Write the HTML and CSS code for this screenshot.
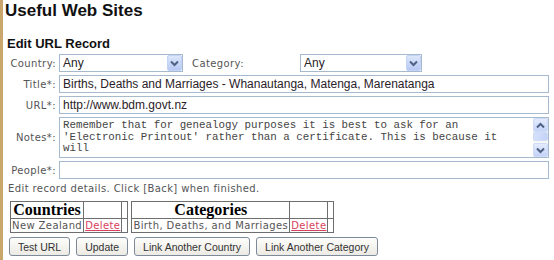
FILE: index.html
```html
<!DOCTYPE html>
<html lang="en">
<head>
	<meta charset="UTF-8">
	<title>Useful Web Sites</title>
	<link rel="stylesheet" href="styles.css">
</head>
<body>
	<h1 class="page-title">Useful Web Sites</h1>
	<h2 class="form-title">Edit URL Record</h2>

	<form class="record">
		<div class="row">
			<label class="lbl">Country:</label>
			<span class="combo combo-country">
				<select><option>Any</option></select>
				<span class="combo-btn"><svg width="9" height="7" viewBox="0 0 9 7"><path d="M1 1.5 L4.5 5 L8 1.5" fill="none" stroke="#4d6185" stroke-width="2"/></svg></span>
			</span>
			<label class="lbl-cat">Category:</label>
			<span class="combo combo-cat">
				<select><option>Any</option></select>
				<span class="combo-btn"><svg width="9" height="7" viewBox="0 0 9 7"><path d="M1 1.5 L4.5 5 L8 1.5" fill="none" stroke="#4d6185" stroke-width="2"/></svg></span>
			</span>
		</div>
		<div class="row">
			<label class="lbl">Title*:</label>
			<input class="field" type="text" value="Births, Deaths and Marriages - Whanautanga, Matenga, Marenatanga">
		</div>
		<div class="row">
			<label class="lbl">URL*:</label>
			<input class="field" type="text" value="http://www.bdm.govt.nz">
		</div>
		<div class="row">
			<label class="lbl">Notes*:</label>
			<span class="notes-wrap">
				<textarea class="field notes">Remember that for genealogy purposes it is best to ask for an 'Electronic Printout' rather than a certificate. This is because it will</textarea>
				<span class="scrollbar">
					<span class="sb-btn"><svg width="9" height="7" viewBox="0 0 9 7"><path d="M1 5.5 L4.5 2 L8 5.5" fill="none" stroke="#4d6185" stroke-width="2"/></svg></span>
					<span class="sb-thumb"></span>
					<span class="sb-track"></span>
					<span class="sb-btn"><svg width="9" height="7" viewBox="0 0 9 7"><path d="M1 1.5 L4.5 5 L8 1.5" fill="none" stroke="#4d6185" stroke-width="2"/></svg></span>
				</span>
			</span>
		</div>
		<div class="row">
			<label class="lbl">People*:</label>
			<input class="field" type="text" value="">
		</div>
	</form>

	<p class="hint">Edit record details. Click [Back] when finished.</p>

	<div class="links">
		<table class="link-table">
			<tr><th>Countries</th><th></th><th class="spacer"></th></tr>
			<tr><td>New Zealand</td><td><a href="">Delete</a></td><td class="spacer"></td></tr>
		</table>
		<table class="link-table">
			<tr><th>Categories</th><th></th><th class="spacer"></th></tr>
			<tr><td>Birth, Deaths, and Marriages</td><td><a href="">Delete</a></td><td class="spacer"></td></tr>
		</table>
	</div>

	<div class="buttons">
		<button type="button">Test URL</button>
		<button type="button">Update</button>
		<button type="button" class="wide">Link Another Country</button>
		<button type="button" class="wide">Link Another Category</button>
	</div>
</body>
</html>
```

FILE: styles.css
```css
*{box-sizing:border-box;}
html,body{height:100%;}
body{margin:0;padding:0 0 0 2px;border-left:3px solid #c8a66c;min-height:260px;background:#fff;font-family:"DejaVu Sans",Verdana,sans-serif;font-size:10px;letter-spacing:0.4px;color:#555;}

.page-title{margin:0;padding-top:1px;font:bold 17px/20px "Liberation Sans",Arial,sans-serif;letter-spacing:0;color:#111;}
.form-title{margin:15px 0 0 2px;font:bold 13px/16px "Liberation Sans",Arial,sans-serif;letter-spacing:0;color:#111;}

.record{margin-top:2px;}
.record .row{display:flex;align-items:center;margin-bottom:3px;}
.lbl{width:51px;text-align:right;margin-right:3px;white-space:nowrap;}
.lbl-cat{width:108px;margin-left:9px;}

.field{width:490px;height:18px;border:1px solid #a5b9cf;padding:0 3px;font:12px "Liberation Sans",Arial,sans-serif;letter-spacing:0;color:#2a2228;background:#fff;outline:none;}

.combo{position:relative;display:inline-block;height:18px;}
.combo select{appearance:none;-webkit-appearance:none;width:100%;height:18px;border:1px solid #a5b9cf;padding:0 3px;font:12px "Liberation Sans",Arial,sans-serif;letter-spacing:0;color:#2a2228;background:#fff;border-radius:0;}
.combo-country{width:124px;}
.combo-cat{width:122px;}
.combo-btn{position:absolute;top:1px;right:1px;width:15px;height:16px;display:flex;align-items:center;justify-content:center;background:linear-gradient(#dce6fb,#b7c9f4);border:1px solid #c3d2f5;border-radius:2px;}

.notes-wrap{position:relative;display:inline-block;}
.notes{display:block;height:41px;padding:2px 40px 0 3px;font:10.8px/11.5px "Liberation Mono","Courier New",monospace;color:#444;resize:none;overflow:hidden;}
.scrollbar{position:absolute;top:1px;right:1px;bottom:1px;width:15px;display:flex;flex-direction:column;background:#f7f7f3;}
.sb-btn{height:14px;display:flex;align-items:center;justify-content:center;background:linear-gradient(#e3ebfd,#c4d3f7);border:1px solid #d0dbf7;border-radius:2px;}
.sb-thumb{height:9px;background:linear-gradient(90deg,#d6e1fb,#c3d2f7);border:1px solid #d0dbf7;border-radius:2px;}
.sb-track{flex:1;}

.hint{margin:2px 0 0 3px;line-height:14px;}

.links{display:flex;gap:3px;margin:5px 0 0 5px;align-items:flex-start;}
.link-table{border-collapse:collapse;border:1px solid #6e6e6e;}
.link-table th,.link-table td{border:1px solid #6e6e6e;padding:0 1px;}
.link-table th{font:bold 16px/16px "Liberation Serif","Times New Roman",serif;letter-spacing:0;color:#000;height:17px;}
.link-table td{font-size:10px;line-height:13px;color:#555;}
.link-table a{color:#d8425c;}
.link-table .spacer{width:6px;padding:0;}

.buttons{display:flex;gap:6px;margin:4px 0 0 4px;}
.buttons button{height:19px;padding:0 8px;border:1px solid #7d8a9c;border-radius:3px;background:linear-gradient(#fdfdfb,#eceae3);font:10.5px "Liberation Sans",Arial,sans-serif;letter-spacing:0;color:#333;}
```
